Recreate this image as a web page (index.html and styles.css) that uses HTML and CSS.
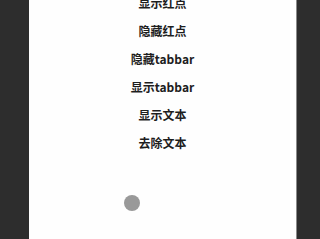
FILE: index.html
```html
<!DOCTYPE html>
<html lang="zh">
<head>
    <meta charset="UTF-8">
    <meta name="viewport" content="width=device-width, initial-scale=1.0">
    <title>tabbar</title>
    <link rel="stylesheet" href="styles.css">
</head>
<body>
    <div class="page">
        <div class="menu">
            <div class="menu-item">显示红点</div>
            <div class="menu-item">隐藏红点</div>
            <div class="menu-item">隐藏tabbar</div>
            <div class="menu-item">显示tabbar</div>
            <div class="menu-item">显示文本</div>
            <div class="menu-item">去除文本</div>
        </div>
        <div class="float-dot"></div>
    </div>
</body>
</html>
```

FILE: styles.css
```css
html, body {
    margin: 0;
    height: 100%;
}
body {
    background-color: #2d2d2d;
    font-family: "Noto Sans CJK SC", "Noto Sans", sans-serif;
    overflow: hidden;
}
.page {
    position: relative;
    margin-left: 29px;
    width: 267px;
    height: 100%;
    background: #fefefe;
    border-right: 1px solid #8a8a8a;
    overflow: hidden;
}
.menu {
    margin-top: -11px;
}
.menu-item {
    height: 28px;
    line-height: 28px;
    text-align: center;
    font-size: 12px;
    font-weight: bold;
    color: #1e1e1e;
}
.float-dot {
    position: absolute;
    left: 95px;
    top: 195px;
    width: 16px;
    height: 16px;
    border-radius: 50%;
    background: #999;
}
```
